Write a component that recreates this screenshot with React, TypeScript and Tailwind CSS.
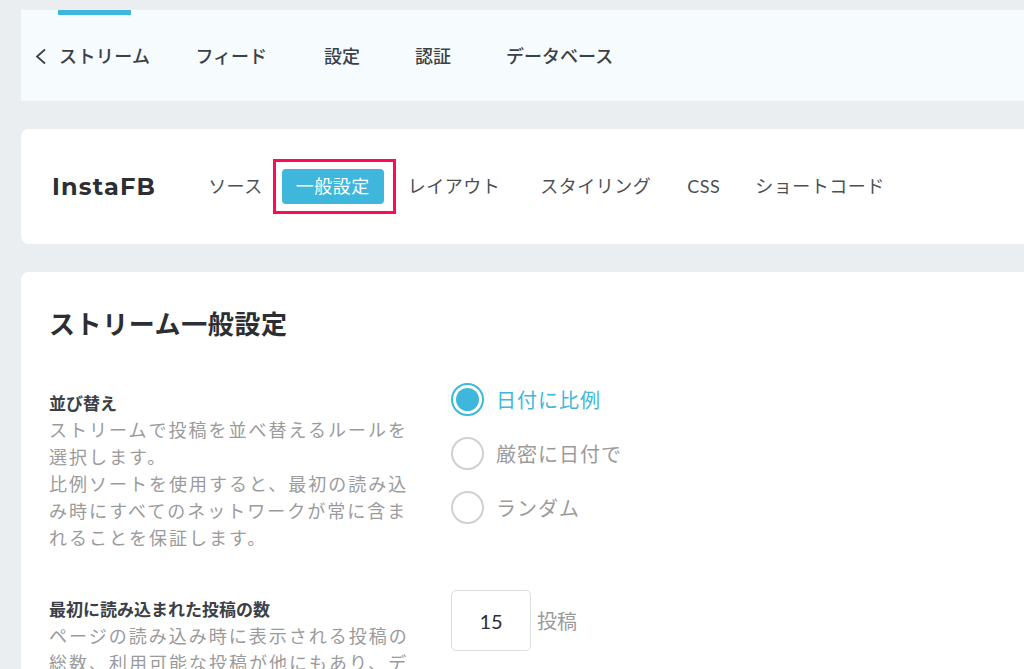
import { ReactNode } from 'react';

const JP = "font-['Lato','Noto_Sans_CJK_JP',sans-serif]";

const topNav = [
  { label: 'フィード', ml: 'ml-[45px]' },
  { label: '設定', ml: 'ml-[57px]' },
  { label: '認証', ml: 'ml-[55px]' },
  { label: 'データベース', ml: 'ml-[55px]' },
];

const sortOptions = ['日付に比例', '厳密に日付で', 'ランダム'];

export default function App() {
  return (
    <div className={`${JP} h-[669px] w-[1024px] overflow-hidden bg-[#ebeef1] pl-[21px] pt-[10px]`}>
      {/* stream navigation */}
      <div className="flex h-[91px] w-[1030px] flex-col bg-[#f6fbfe]">
        <div className="ml-[37px] h-[5px] w-[73px] bg-[#3fb7dc]" />
        <div className="flex flex-1 items-center pb-[4px] pl-[14px] text-[18px] font-medium text-[#3c4047]">
          <svg width="12" height="17" viewBox="0 0 12 17" className="mr-[12px]">
            <polyline points="10,1.5 2,8.5 10,15.5" fill="none" stroke="#3c4047" strokeWidth="1.8" />
          </svg>
          <span className="tracking-[0.4px]">ストリーム</span>
          {topNav.map((n) => (
            <span key={n.label} className={n.ml}>
              {n.label}
            </span>
          ))}
        </div>
      </div>

      {/* feed tabs */}
      <div className="mt-[28px] flex h-[115px] w-[1030px] items-center rounded-lg bg-white pl-[31px] text-[18px] tracking-[0.5px] text-[#4a4f56]">
        <span className="font-['Montserrat','Noto_Sans',sans-serif] text-[24px] font-bold tracking-[1.2px] text-[#2b2f33]">
          InstaFB
        </span>
        <span className="ml-[52px]">ソース</span>
        <span className="ml-[10px] border-[3px] border-[#ff0a54] py-[7px] pl-[6px] pr-[9px]">
          <span className="flex h-[35px] w-[102px] items-center justify-center rounded-[4px] bg-[#3fb7dc] text-white">
            一般設定
          </span>
        </span>
        <span className="ml-[12px]">レイアウト</span>
        <span className="ml-[40px]">スタイリング</span>
        <span className="ml-[36px]">CSS</span>
        <span className="ml-[35px]">ショートコード</span>
      </div>

      {/* general settings */}
      <div className="mt-[28px] h-[500px] w-[1030px] rounded-lg bg-white pl-[28px] pt-[32px]">
        <h1 className="text-[26px] font-bold leading-[40px] tracking-[0.6px] text-[#2b2f33]">ストリーム一般設定</h1>

        <SettingRow
          className="mt-[46px]"
          title="並び替え"
          description={
            <>
              ストリームで投稿を並べ替えるルールを選択します。
              <br />
              比例ソートを使用すると、最初の読み込み時にすべてのネットワークが常に含まれることを保証します。
            </>
          }
        >
          <div className="-mt-[7px] flex flex-col gap-[21px]">
            {sortOptions.map((opt, i) => (
              <Radio key={opt} label={opt} checked={i === 0} />
            ))}
          </div>
        </SettingRow>

        <SettingRow
          className="mt-[44px]"
          title="最初に読み込まれた投稿の数"
          description="ページの読み込み時に表示される投稿の総数、利用可能な投稿が他にもあり、データベースに"
        >
          <div className="-mt-[6px] flex items-center">
            <div className="flex h-[61px] w-[80px] items-center justify-center rounded-[5px] border border-[#dcdfe2] text-[20px] text-[#2b2f33]">
              15
            </div>
            <span className="ml-[6px] text-[20px] text-[#9b9b9b]">投稿</span>
          </div>
        </SettingRow>
      </div>
    </div>
  );
}

interface SettingRowProps {
  title: string;
  description: ReactNode;
  className?: string;
  children: ReactNode;
}

function SettingRow({ title, description, className, children }: SettingRowProps) {
  return (
    <div className={`flex items-start ${className ?? ''}`}>
      <div className="w-[402px] shrink-0">
        <p className="text-[17px] font-bold leading-[27px] text-[#3c4047]">{title}</p>
        <p className="w-[372px] text-[18px] leading-[27px] tracking-[2px] text-[#9b9b9b]">{description}</p>
      </div>
      {children}
    </div>
  );
}

function Radio({ label, checked }: { label: string; checked?: boolean }) {
  return (
    <label className="flex items-center">
      <span
        className={`flex h-[33px] w-[33px] items-center justify-center rounded-full border-2 ${
          checked ? 'border-[#3fb7dc]' : 'border-[#d0d0d0]'
        }`}
      >
        {checked && <span className="h-[23px] w-[23px] rounded-full bg-[#3fb7dc]" />}
      </span>
      <span className={`ml-[12px] text-[20px] tracking-[1px] ${checked ? 'text-[#3fb7dc]' : 'text-[#9b9b9b]'}`}>
        {label}
      </span>
    </label>
  );
}
